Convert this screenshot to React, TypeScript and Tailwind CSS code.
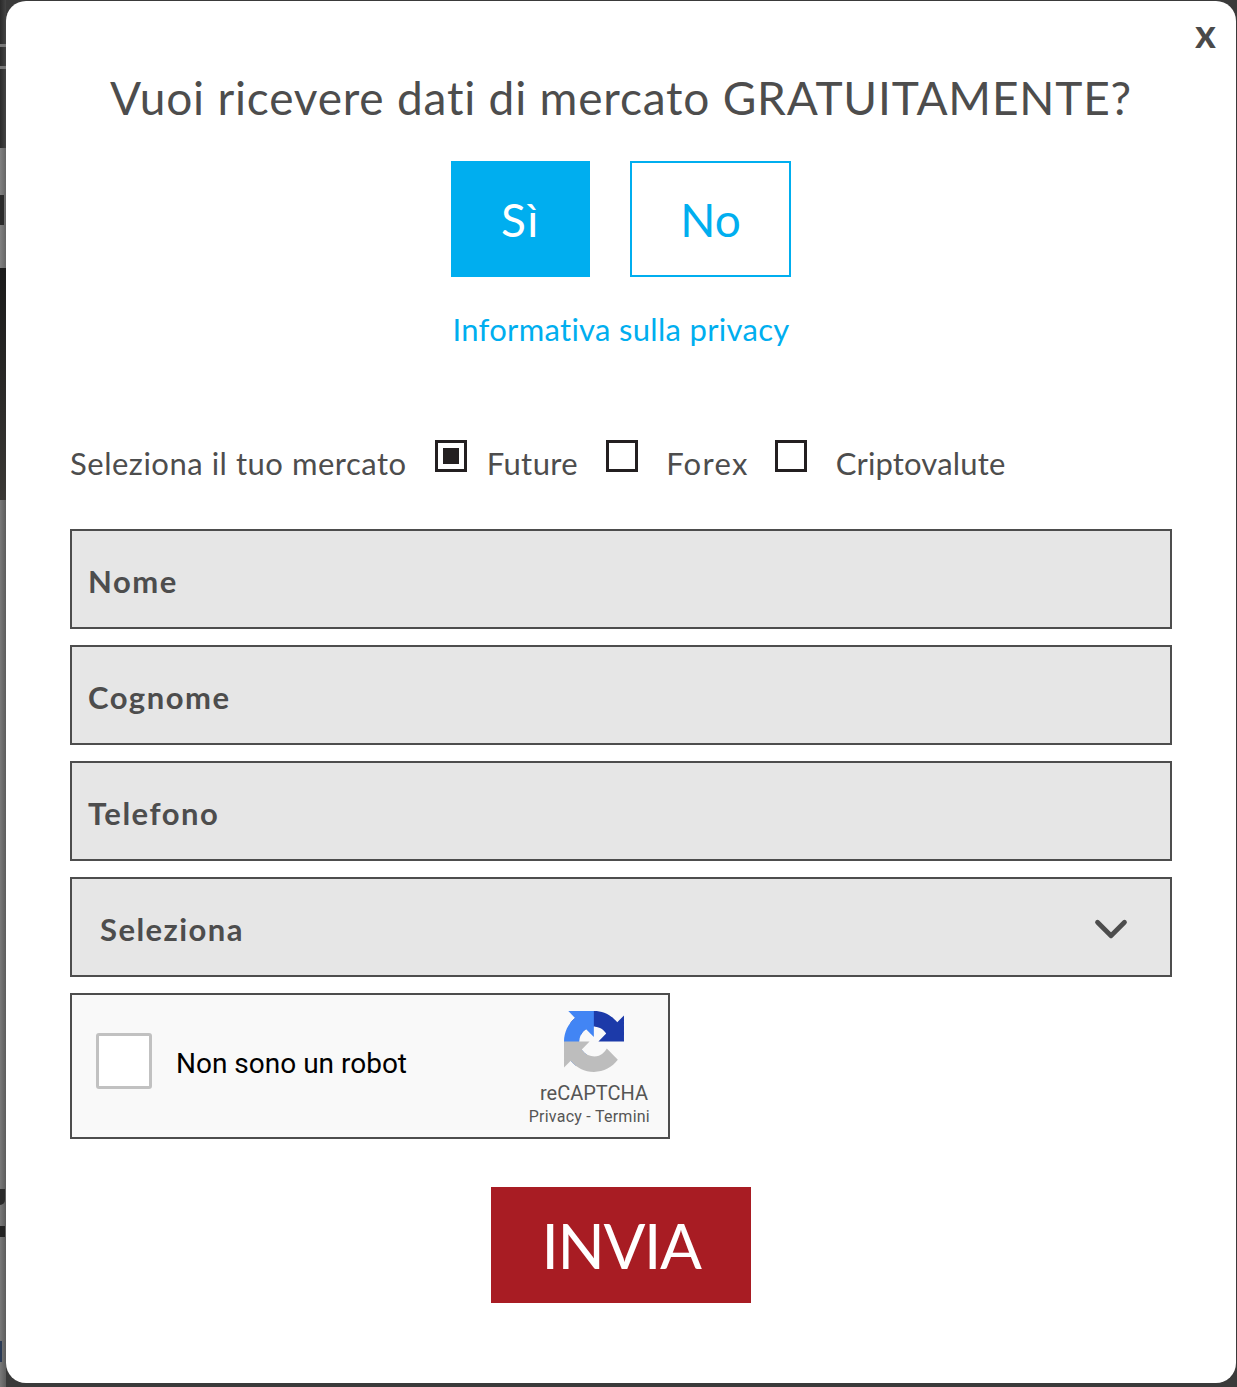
import { ChevronDown } from "lucide-react";

const font = "font-['Lato','Liberation_Sans',sans-serif]";

const fields = ["Nome", "Cognome", "Telefono"];

const markets = [
  { label: "Future", checked: true, box: "ml-[28px]", text: "ml-[20px] tracking-[0.4px]" },
  { label: "Forex", checked: false, box: "ml-[28px]", text: "ml-[28px] tracking-[1.3px]" },
  { label: "Criptovalute", checked: false, box: "ml-[26px]", text: "ml-[29px] tracking-[0.17px]" },
];

const RecaptchaLogo = () => (
  <svg width="60" height="61" viewBox="0 0 64 64" preserveAspectRatio="none">
    <path d="M64 31.955l-.033-1.37V4.687l-7.16 7.16C50.948 4.674 42.033.093 32.05.093c-10.4 0-19.622 4.96-25.458 12.64l11.736 11.86a15.55 15.55 0 0 1 4.754-5.334c2.05-1.6 4.952-2.906 8.968-2.906.485 0 .86.057 1.135.163 4.976.393 9.288 3.14 11.828 7.124l-8.307 8.307L64 31.953" fill="#1c3aa9" />
    <path d="M31.862.094l-1.37.033H4.594l7.16 7.16C4.58 13.147 0 22.06 0 32.046c0 10.4 4.96 19.622 12.64 25.458l11.86-11.736a15.55 15.55 0 0 1-5.334-4.754c-1.6-2.05-2.906-4.952-2.906-8.968 0-.485.057-.86.163-1.135.393-4.976 3.14-9.288 7.124-11.828l8.307 8.307L31.86.095" fill="#4285f4" />
    <path d="M.001 32.045l.033 1.37v25.898l7.16-7.16c5.86 7.173 14.774 11.754 24.76 11.754 10.4 0 19.622-4.96 25.458-12.64l-11.736-11.86a15.55 15.55 0 0 1-4.754 5.334c-2.05 1.6-4.952 2.906-8.968 2.906-.485 0-.86-.057-1.135-.163-4.976-.393-9.288-3.14-11.828-7.124l8.307-8.307L0 32.045" fill="#bdbdbd" />
  </svg>
);

export default function App() {
  return (
    <div className={`relative h-[1387px] w-[1237px] overflow-hidden bg-[#3a3a3a] ${font}`}>
      {/* page behind the modal, only a sliver shows */}
      <div className="absolute inset-y-0 left-0 flex w-[6px] flex-col">
        <div className="h-[148px] bg-linear-to-r from-[#2a2a2a] to-[#444444]" />
        <div className="h-[120px] bg-linear-to-r from-[#808080] to-[#666666]" />
        <div className="h-[232px] bg-linear-to-b from-[#1a1a1a] to-[#3a3835]" />
        <div className="flex-1 bg-linear-to-r from-[#787878] to-[#5c5c5c]" />
      </div>
      <div className="absolute left-0 top-[44px] h-[3px] w-[6px] bg-[#777777]" />
      <div className="absolute left-0 top-[66px] h-[3px] w-[6px] bg-[#777777]" />
      <div className="absolute left-0 top-[195px] h-[30px] w-[4px] bg-[#2a2a2a]" />
      <div className="absolute left-0 top-[1189px] h-[16px] w-[5px] rounded-br-[5px] bg-[#2a2a2a]" />
      <div className="absolute left-0 top-[1226px] h-[11px] w-[5px] bg-[#222222]" />
      <div className="absolute left-0 top-[1341px] h-[21px] w-[2px] bg-[#2a3a55]" />

      <div className="absolute left-[6px] top-[1px] h-[1382px] w-[1230px] rounded-[20px] bg-white">
        <button className="absolute right-[20px] top-[12px] text-[40px] font-bold leading-none text-[#4a4a4a]">x</button>

        <div className="flex flex-col px-[64px]">
          <h2 className="mt-[68px] whitespace-nowrap text-center text-[46px] leading-[58px] tracking-[0.8px] text-[#4d4d4d]">
            Vuoi ricevere dati di mercato GRATUITAMENTE?
          </h2>

          <div className="mt-[34px] flex justify-center gap-[40px]">
            <button className="h-[116px] w-[139px] bg-[#00aeef] text-[46px] tracking-[1.5px] text-white">Sì</button>
            <button className="h-[116px] w-[161px] border-2 border-[#00aeef] bg-white text-[46px] text-[#00aeef]">No</button>
          </div>

          <a className="mt-[32px] text-center text-[31px] leading-[40px] tracking-[0.3px] text-[#00aeef]">Informativa sulla privacy</a>

          <div className="mt-[95px] flex h-[40px] items-center text-[31px] leading-[40px] text-[#4d4d4d]">
            <span className="relative -top-[1px] tracking-[0.52px]">Seleziona il tuo mercato</span>
            {markets.map((m) => (
              <label key={m.label} className="flex items-center">
                <span className={`${m.box} mb-[16px] flex h-[32px] w-[32px] items-center justify-center border-[3px] border-[#231f20]`}>
                  {m.checked && <span className="h-[16px] w-[16px] bg-[#231f20]" />}
                </span>
                <span className={`relative -top-[1px] ${m.text}`}>{m.label}</span>
              </label>
            ))}
          </div>

          <div className="mt-[45px] flex flex-col gap-[16px]">
            {fields.map((f) => (
              <div key={f} className="flex h-[100px] w-[1102px] items-center border-2 border-[#4d4d4d] bg-[#e6e6e6] pl-[16px] pt-[4px] text-[31px] font-bold tracking-[1.5px] text-[#4d4d4d]">
                {f}
              </div>
            ))}
            <div className="flex h-[100px] w-[1102px] items-center justify-between border-2 border-[#4d4d4d] bg-[#e6e6e6] pl-[28px] pr-[32px] pt-[4px] text-[31px] font-bold tracking-[1.45px] text-[#4d4d4d]">
              Seleziona
              <ChevronDown size={54} strokeWidth={2.1} className="text-[#4d4d4d]" />
            </div>

            <div className="flex h-[146px] w-[600px] items-center border-2 border-[#4d4d4d] bg-[#f9f9f9] font-['Roboto',sans-serif]">
              <span className="mb-[10px] ml-[24px] h-[56px] w-[56px] rounded-[3px] border-[3px] border-[#c1c1c1] bg-white" />
              <span className="mb-[4px] ml-[25px] -translate-x-[1px] text-[28px] text-black">Non sono un robot</span>
              <div className="ml-auto mr-[18px] flex flex-col items-end pt-[4px]">
                <div className="mr-[26px]">
                  <RecaptchaLogo />
                </div>
                <span className="mr-[2px] mt-[9px] text-[20px] leading-[24px] text-[#555555]">reCAPTCHA</span>
                <span className="mt-[1px] translate-y-[1px] text-[16px] leading-[20px] tracking-[0.25px] text-[#555555]">Privacy - Termini</span>
              </div>
            </div>
          </div>

          <button className="mx-auto mt-[48px] h-[116px] w-[260px] bg-[#a81c23] text-[62px] tracking-[-1.4px] text-white">INVIA</button>
        </div>
      </div>
    </div>
  );
}
